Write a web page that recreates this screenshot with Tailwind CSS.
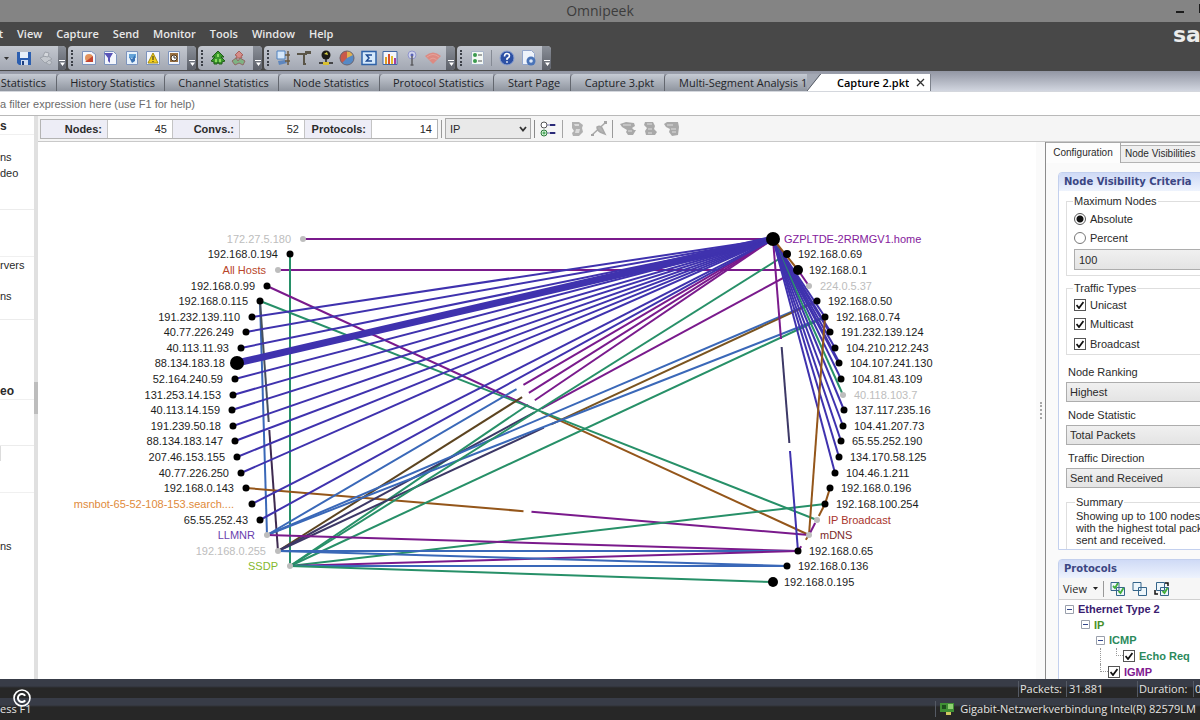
<!DOCTYPE html>
<html lang="en">
<head>
  <meta charset="UTF-8" />
  <meta name="viewport" content="width=device-width, initial-scale=1" />
  <title>Omnipeek</title>
  <script src="https://cdn.jsdelivr.net/npm/@tailwindcss/browser@4"></script>
</head>
<body class="h-screen flex flex-col overflow-hidden bg-white text-[11px] leading-4 text-[#2a2a2a] font-['Liberation_Sans',Arial,sans-serif]">

  <!-- Title bar -->
  <header class="relative shrink-0 h-[22px] bg-[#848484] flex items-center justify-center font-['Open_Sans',sans-serif]">
    <h1 class="text-sm text-[#3c3c3c]">Omnipeek</h1>
    <button aria-label="Minimize" class="absolute right-4 top-[11px] w-2 h-[2px] bg-[#1c1c1c]"></button>
    <button aria-label="Maximize" class="absolute -right-2 top-1 size-[9px] border border-[#1c1c1c]"></button>
  </header>

  <!-- Menu and toolbars -->
  <div class="relative shrink-0 bg-[#484848]">
    <nav class="h-6 flex items-center gap-[14px] text-[#e8e8e8] font-semibold font-['Open_Sans',sans-serif]">
      <a href="#" class="w-[3px] flex justify-end">t</a>
      <a href="#">View</a>
      <a href="#">Capture</a>
      <a href="#">Send</a>
      <a href="#">Monitor</a>
      <a href="#">Tools</a>
      <a href="#">Window</a>
      <a href="#">Help</a>
    </nav>
    <div class="absolute left-[1173px] top-px text-[22px] leading-6 font-bold text-[#ececec] whitespace-nowrap font-['DejaVu_Sans',sans-serif]">sa</div>

    <div class="h-[25px] pb-px flex gap-[2px]">
      <div class="w-[66px] flex rounded-r-sm overflow-hidden bg-linear-to-b from-[#c3c7cf] to-[#a3a8b3]">
        <div class="flex-1 flex items-center justify-between pl-1 pr-1">
          <svg class="w-[5px] h-[3px]" viewBox="0 0 5 3"><path d="M0 0h5L2.500 3z" fill="#333"/></svg>
          <button aria-label="Save"><svg class="size-4" viewBox="0 0 16 16"><path d="M1 2h14v13H3l-2-2z" fill="#2c5fb0"/><path d="M4 2h8v6H4z" fill="#e8f0fa"/><path d="M5 10h7v5H5z" fill="#cfdcf0"/><path d="M6 11h2v4H6z" fill="#1d3f80"/></svg></button>
          <button aria-label="Print"><svg class="size-4" viewBox="0 0 16 16" fill="#c4c8ce" stroke="#9da2aa"><path d="M2 8l7-3 5 4-7 4z"/><path d="M5 6l2-4 4 1-1 4z" fill="#d5d8dd"/><path d="M8 13l3-3 3 2-2 3z"/></svg></button>
        </div>
        <button aria-label="More buttons" class="w-2 flex items-end justify-center pb-1 bg-linear-to-b from-[#8b9099] to-[#5c6069]"><svg class="w-[6px] h-[6px]" viewBox="0 0 6 6" fill="#fff"><path d="M0 0h6v1H0zM1 2.500h5L3.500 6z"/></svg></button>
      </div>

      <div class="w-[128px] flex rounded-sm overflow-hidden bg-linear-to-b from-[#c3c7cf] to-[#a3a8b3]">
        <div class="flex-1 flex items-center justify-between pl-[3px] pr-[5px]">
          <span class="border-l-2 border-dotted border-[#3c4048] h-4"></span>
          <button aria-label="Capture window" class="ml-[3px]"><svg class="size-4" viewBox="0 0 16 16"><path d="M1.500 1.500h9l4 3v10h-13z" fill="#f3f6fc" stroke="#7c93bd"/><circle cx="8" cy="8" r="4" fill="#e2925c"/><path d="M4 12l8-6v6z" fill="#c54430"/></svg></button>
          <button aria-label="Filters"><svg class="size-4" viewBox="0 0 16 16"><path d="M2.500 1.500h9l3 3v10h-12z" fill="#f3f6fc" stroke="#7c93bd"/><path d="M2 3h9l-3 5v5l-2-2V8z" fill="#5a55b8"/></svg></button>
          <button aria-label="Packets"><svg class="size-4" viewBox="0 0 16 16"><path d="M2.500 1.500h11v13h-11z" fill="#e6f1fb" stroke="#7c93bd"/><path d="M5 4h7v4H5z" fill="#64a3d8"/><path d="M5 7l3 2 3-4v6l-3 2z" fill="#3b73b4"/></svg></button>
          <button aria-label="Alarms"><svg class="size-4" viewBox="0 0 16 16"><path d="M1.500 1.500h13v13h-13z" fill="#f3f6fc" stroke="#7c93bd"/><path d="M8 3l5 10H3z" fill="#f2cf1d" stroke="#a48b10"/><path d="M7.500 6h1v4h-1zM7.500 11h1v1h-1z" fill="#222"/></svg></button>
          <button aria-label="Log"><svg class="size-4" viewBox="0 0 16 16"><path d="M2.500 1.500h11v13h-11z" fill="#f3f6fc" stroke="#7c93bd"/><path d="M4 3h8v9H4z" fill="#9a7040"/><circle cx="8" cy="8" r="3" fill="#fff" stroke="#4a3620"/><path d="M8 6v2h2" fill="none" stroke="#333"/></svg></button>
        </div>
        <button aria-label="More buttons" class="w-[9px] flex items-end justify-center pb-1 bg-linear-to-b from-[#8b9099] to-[#5c6069]"><svg class="w-[6px] h-[6px]" viewBox="0 0 6 6" fill="#fff"><path d="M0 0h6v1H0zM1 2.500h5L3.500 6z"/></svg></button>
      </div>

      <div class="w-16 flex rounded-sm overflow-hidden bg-linear-to-b from-[#c3c7cf] to-[#a3a8b3]">
        <div class="flex-1 flex items-center justify-between pl-[3px] pr-[6px]">
          <span class="border-l-2 border-dotted border-[#3c4048] h-4"></span>
          <button aria-label="Start capture" class="ml-[2px]"><svg class="size-4" viewBox="0 0 16 16"><path d="M8 1l6 6h-3l4 4-3 1v2H9l-1-2-1 2H4v-2l-3-1 4-4H2z" fill="#3a9a2c" stroke="#215c18"/><path d="M7 4h2v3H7zM5 9h2v3H5zM9 9h2v3H9z" fill="#8ad862"/></svg></button>
          <button aria-label="Stop capture"><svg class="size-4" viewBox="0 0 16 16"><path d="M8 1l4 4-2 1 1 2H5l1-2-2-1z" fill="#d58c88" stroke="#a8625c"/><path d="M1 11l4-3 2 3 2-3 5 3-2 4-4-2-4 2z" fill="#7fb283" stroke="#8e6a66"/></svg></button>
        </div>
        <button aria-label="More buttons" class="w-[9px] flex items-end justify-center pb-1 bg-linear-to-b from-[#8b9099] to-[#5c6069]"><svg class="w-[6px] h-[6px]" viewBox="0 0 6 6" fill="#fff"><path d="M0 0h6v1H0zM1 2.500h5L3.500 6z"/></svg></button>
      </div>

      <div class="w-[191px] flex rounded-sm overflow-hidden bg-linear-to-b from-[#c3c7cf] to-[#a3a8b3]">
        <div class="flex-1 flex items-center justify-between pl-[3px] pr-[5px]">
          <span class="border-l-2 border-dotted border-[#3c4048] h-4"></span>
          <button aria-label="Node statistics"><svg class="size-4" viewBox="0 0 16 16"><path d="M2 1h8v8H2z" fill="#d6e7f8" stroke="#4e82c0"/><path d="M3 11l7-1 2 3-8 2z" fill="#5e86bd"/><path d="M13 1v14M10 5h5M10 11h5" stroke="#6b5a40" stroke-width="1.500"/></svg></button>
          <button aria-label="Protocol statistics"><svg class="size-4" viewBox="0 0 16 16"><path d="M1 3h6v2H1zM9 1h6v3H9z" fill="#5a5548"/><path d="M6 4h5M8 4v10h2" fill="none" stroke="#5a5548" stroke-width="2"/></svg></button>
          <button aria-label="Network statistics"><svg class="size-4" viewBox="0 0 16 16"><circle cx="8" cy="5" r="4.500" fill="#1b1b18"/><path d="M6 4l3-2 1 3z" fill="#d8d040"/><path d="M8 9v4M1 13h14" stroke="#222" stroke-width="1.500"/><path d="M5 12h6v3H5z" fill="#d8c030"/></svg></button>
          <button aria-label="Size statistics"><svg class="size-4" viewBox="0 0 16 16"><circle cx="8" cy="8" r="7" fill="#5689c4"/><path d="M8 8V1A7 7 0 0 1 14 5z" fill="#e0b050"/><path d="M8 8L3 13A7 7 0 0 1 8 1z" fill="#c9594a"/><circle cx="8" cy="8" r="7" fill="none" stroke="#6c6670"/></svg></button>
          <button aria-label="Summary statistics"><svg class="size-4" viewBox="0 0 16 16"><path d="M1 1.500h14v13H1z" fill="#d5e9fb" stroke="#2e62a8" stroke-width="1.500"/><path d="M11 5H5.500L8 8l-2.500 3H11" fill="none" stroke="#1f4c94" stroke-width="1.500"/></svg></button>
          <button aria-label="History statistics"><svg class="size-4" viewBox="0 0 16 16"><path d="M1 1.500h14v13H1z" fill="#f4f6fb" stroke="#4268a4"/><path d="M3 7h2v7H3z" fill="#e0a020"/><path d="M6 4h2v10H6z" fill="#d8502c"/><path d="M9 6h2v8H9z" fill="#e5bb30"/><path d="M12 8h2v6h-2z" fill="#a840a0"/></svg></button>
          <button aria-label="Channel statistics"><svg class="size-4" viewBox="0 0 16 16"><circle cx="8" cy="5" r="4" fill="#cfd3ec" stroke="#8f94cc"/><circle cx="8" cy="5" r="1.500" fill="#5a62b4"/><path d="M8 6v9M6.500 15h3" stroke="#5c5c60" stroke-width="1.500"/></svg></button>
          <button aria-label="Wireless signal"><svg class="size-4" viewBox="0 0 16 16"><path d="M0 6q8-7 16 0L8 14z" fill="#dc8a82"/><path d="M2 7q6-5 12 0M4.500 9.500q3.500-3 7 0" fill="none" stroke="#e6a29a"/></svg></button>
        </div>
        <button aria-label="More buttons" class="w-[9px] flex items-end justify-center pb-1 bg-linear-to-b from-[#8b9099] to-[#5c6069]"><svg class="w-[6px] h-[6px]" viewBox="0 0 6 6" fill="#fff"><path d="M0 0h6v1H0zM1 2.500h5L3.500 6z"/></svg></button>
      </div>

      <div class="w-[94px] flex rounded-sm overflow-hidden bg-linear-to-b from-[#c3c7cf] to-[#a3a8b3]">
        <div class="flex-1 flex items-center justify-between pl-[3px] pr-[5px]">
          <span class="border-l-2 border-dotted border-[#3c4048] h-4"></span>
          <button aria-label="Options"><svg class="size-4" viewBox="0 0 16 16"><path d="M2.500 1.500h12v13h-12z" fill="#f3f8f4" stroke="#a8b4c8"/><circle cx="6" cy="5" r="2" fill="#3a9a4c"/><circle cx="6" cy="11" r="2" fill="#3a9a4c"/><path d="M9 5h4M9 11h4" stroke="#555"/></svg></button>
          <span class="w-px h-4 bg-[#858a94]"></span>
          <button aria-label="Help"><svg class="size-4" viewBox="0 0 16 16"><circle cx="8" cy="8" r="7" fill="#2c50a4" stroke="#8aa0d0"/><path d="M5.500 6.500q0-3 2.500-3t2.500 2.300Q10.500 7.500 8 8.500V10M8 11.200v1.600" fill="none" stroke="#fff" stroke-width="1.600"/></svg></button>
          <button aria-label="Readme"><svg class="size-4" viewBox="0 0 16 16"><path d="M1.500.500h9l3 3v11h-12z" fill="#eef3fb" stroke="#93a6cb"/><circle cx="10" cy="11" r="4.500" fill="#4a74b8"/><circle cx="10" cy="11" r="1.800" fill="#dbe7f7"/></svg></button>
        </div>
        <button aria-label="More buttons" class="w-[9px] flex items-end justify-center pb-1 bg-linear-to-b from-[#8b9099] to-[#5c6069]"><svg class="w-[6px] h-[6px]" viewBox="0 0 6 6" fill="#fff"><path d="M0 0h6v1H0zM1 2.500h5L3.500 6z"/></svg></button>
      </div>
    </div>
  </div>

  <!-- Document tabs -->
  <div role="tablist" class="relative shrink-0 h-5 pt-[3px] flex bg-linear-to-b from-[#9296a3] to-[#d2d6e0] font-medium text-[#222428] font-['Open_Sans',sans-serif] whitespace-nowrap">
    <button role="tab" class="w-14 pr-[10px] flex justify-end items-center bg-linear-to-b from-[#c6cbd4] to-[#8f959f]">Statistics</button>
    <button role="tab" class="w-[108px] pl-1 flex justify-center items-center border-l border-[#63676f] rounded-tl bg-linear-to-b from-[#c6cbd4] to-[#8f959f]">History Statistics</button>
    <button role="tab" class="w-[114px] pl-1 flex justify-center items-center border-l border-[#63676f] rounded-tl bg-linear-to-b from-[#c6cbd4] to-[#8f959f]">Channel Statistics</button>
    <button role="tab" class="w-[101px] pl-1 flex justify-center items-center border-l border-[#63676f] rounded-tl bg-linear-to-b from-[#c6cbd4] to-[#8f959f]">Node Statistics</button>
    <button role="tab" class="w-[114px] pl-1 flex justify-center items-center border-l border-[#63676f] rounded-tl bg-linear-to-b from-[#c6cbd4] to-[#8f959f]">Protocol Statistics</button>
    <button role="tab" class="w-[77px] pl-1 flex justify-center items-center border-l border-[#63676f] rounded-tl bg-linear-to-b from-[#c6cbd4] to-[#8f959f]">Start Page</button>
    <button role="tab" class="w-[94px] pl-1 flex justify-center items-center border-l border-[#63676f] rounded-tl bg-linear-to-b from-[#c6cbd4] to-[#8f959f]">Capture 3.pkt</button>
    <button role="tab" class="w-[143px] pl-[14px] flex items-center border-l border-[#63676f] rounded-tl bg-linear-to-b from-[#c6cbd4] to-[#8f959f]">Multi-Segment Analysis 1</button>
    <div class="flex">
      <svg class="w-[14px] h-[17px]" viewBox="0 0 14 17"><path d="M0 0h14v17H0z" fill="#a4a9b4"/><path d="M0 17L14 0v17z" fill="#fff"/><path d="M0 17L12 2q1-2 2-2" fill="none" stroke="#555a64"/></svg>
      <button role="tab" aria-selected="true" class="pl-4 flex items-center bg-white font-semibold text-black">Capture 2.pkt</button>
      <button aria-label="Close tab" class="pr-[5px] pl-[7px] flex items-center bg-white border-r border-[#7d828c]"><svg class="size-[9px]" viewBox="0 0 9 9"><path d="M1 1l7 7M8 1L1 8" stroke="#333" stroke-width="1.300"/></svg></button>
    </div>
  </div>

  <!-- Filter expression -->
  <div class="shrink-0 h-[25px] border-t border-b border-t-[#d4d7dd] border-b-[#b9b9b9] flex items-center">
    <input aria-label="Filter expression" placeholder="a filter expression here (use F1 for help)" class="flex-1 outline-none placeholder:text-[#6c6c6c]" />
  </div>

  <main class="flex-1 min-h-0 flex">
    <!-- Views list -->
    <aside class="w-[34px] shrink-0 overflow-hidden">
      <div class="h-[19px] border-b border-[#f0f0f0] flex items-end text-xs font-bold">s</div>
      <ul class="h-[75px] pt-[14px] border-b border-[#ececec]">
        <li>ns</li>
        <li>deo</li>
      </ul>
      <div class="h-[47px] border-b border-[#f0f0f0]"></div>
      <ul class="h-[63px] border-b border-[#ececec] flex flex-col gap-[15px]">
        <li>rvers</li>
        <li>ns</li>
      </ul>
      <div class="h-20 border-b border-[#f0f0f0] flex items-end text-xs font-bold"><span>eo</span></div>
      <div class="h-[46px] border-b border-[#ececec]"></div>
      <div class="h-[15px] w-px bg-[#dcdcdc]"></div>
      <div class="h-[32px] border-b border-[#f0f0f0]"></div>
      <div class="pt-[45px]">ns</div>
    </aside>
    <div class="w-1 shrink-0 bg-[#e0e0e0] flex items-center">
      <div class="w-1 h-8 bg-[#bdbdbd]"></div>
    </div>

    <section class="flex-1 min-w-0 flex flex-col">
      <!-- Counters and peer map tools -->
      <div class="shrink-0 h-[26px] px-[2px] flex items-center bg-[#f5f5f5] border-b border-[#c9c9c9]">
        <dl class="h-5 grid grid-cols-[repeat(6,66px)] items-stretch border border-[#b4b4b4] text-right leading-[18px]">
          <dt class="pr-[5px] font-bold bg-[#ededf6]">Nodes:</dt>
          <dd class="px-[5px] bg-white border-x border-[#c4c4c4]">45</dd>
          <dt class="pr-[5px] font-bold bg-[#ededf6]">Convs.:</dt>
          <dd class="px-[5px] bg-white border-x border-[#c4c4c4]">52</dd>
          <dt class="pr-[5px] font-bold bg-[#ededf6]">Protocols:</dt>
          <dd class="px-[5px] bg-white border-l border-[#c4c4c4]">14</dd>
        </dl>
        <span class="ml-[3px] w-px h-[18px] bg-[#9a9a9a]"></span>
        <div class="relative ml-[3px]">
          <select aria-label="Protocol layer" class="appearance-none block w-[86px] h-[21px] pl-1 border border-[#a9a9a9] bg-[#e9e9e9]">
            <option>IP</option>
          </select>
          <svg class="absolute right-1 top-2 w-2 h-[6px] pointer-events-none" viewBox="0 0 8 6"><path d="M1 1l3 3.500L7 1" fill="none" stroke="#333" stroke-width="1.800"/></svg>
        </div>
        <span class="ml-[3px] w-px h-[18px] bg-[#8a8a8a]"></span>
        <button aria-label="Node options" class="ml-[5px]"><svg class="size-4" viewBox="0 0 16 16"><circle cx="4" cy="4" r="3" fill="#fff" stroke="#555"/><circle cx="4" cy="12" r="3" fill="#d5f0d8" stroke="#2d7a3c"/><path d="M4 10.500v3M2.500 12h3" stroke="#2a9a3c"/><path d="M7 4h9M7 12h9" stroke="#77a" stroke-width="1"/><path d="M10 3h5v2h-5zM10 11h5v2h-5z" fill="#2a2a78"/></svg></button>
        <span class="ml-[6px] w-px h-[18px] bg-[#a5a5a5]"></span>
        <button aria-label="Show node" class="ml-[6px]"><svg class="size-4" viewBox="0 0 16 16" fill="#b0b0b0"><path d="M3 1h7l4 3-1 3 1 4-4 4H4l-1-3 2-2-2-3z"/><path d="M5 3h5v2H6zM7 8h4l-1 4H6z" fill="#dadada"/></svg></button>
        <button aria-label="Arrange map" class="ml-[6px]"><svg class="size-4" viewBox="0 0 16 16" fill="none" stroke="#a8a8a8" stroke-width="1.500"><path d="M1 14L14 2"/><path d="M6 6q3-2 5 1l3 6-5-2q-3-2-3-5z" fill="#b4b4b4"/><path d="M0 13h3v2H0zM13 0h3v3h-3z" fill="#a4a4a4" stroke="none"/></svg></button>
        <span class="ml-[5px] w-px h-[18px] bg-[#9a9a9a]"></span>
        <button aria-label="Filter nodes" class="ml-[7px]"><svg class="size-4" viewBox="0 0 16 16" fill="#a9a9a9"><path d="M0 3l6-2 8 1 1 3-3 2 2 2h2l-3 5H8l-2-3 1-2-5-3z"/><path d="M3 4h8M8 10h4" stroke="#ddd"/></svg></button>
        <button aria-label="Filter pairs" class="ml-[6px]"><svg class="size-4" viewBox="0 0 16 16" fill="#a9a9a9"><path d="M3 1h8l2 4-1 3 3 3-2 3H4l-1-4 2-3-3-3z"/><path d="M5 3h5M6 8h4M6 12h4" stroke="#ddd"/></svg></button>
        <button aria-label="Filter protocols" class="ml-[6px]"><svg class="size-4" viewBox="0 0 16 16" fill="#a9a9a9"><path d="M0 3l3-2h11l1 5-1 8-6 1-3-4 1-3-4-2z"/><path d="M3 4h6M7 8h5M8 11h4" stroke="#ddd"/></svg></button>
      </div>

      <div class="flex-1 min-h-0 flex">
        <!-- Peer map -->
        <div class="flex-1 min-w-0 overflow-hidden bg-white">
          <svg id="peerMap" role="img" aria-label="Peer map" class="block w-[998px] h-[536px]" viewBox="38 142 998 536"></svg>
        </div>

        <div class="w-[10px] shrink-0 bg-[#fafafa] border-r border-[#8c8c8c] flex items-center justify-center">
          <div class="h-[17px] border-l-2 border-dotted border-[#a8a8a8]"></div>
        </div>

        <!-- Configuration panel -->
        <aside class="w-[154px] shrink-0 overflow-hidden bg-[#fafafa] border-t border-[#a8a8a8]">
          <div role="tablist" class="h-5 flex items-end text-[10px]">
            <button role="tab" aria-selected="true" class="h-5 w-[75px] bg-[#fdfdfd] border-r border-[#a8a8a8]">Configuration</button>
            <button role="tab" class="h-[18px] flex-1 pl-1 text-left whitespace-nowrap bg-[#efefef] border-t border-b border-[#b4b4b4]">Node Visibilities</button>
          </div>

          <div class="w-[220px]">
            <section class="mt-[9px] ml-3 h-[378px] overflow-hidden rounded-tl-[4px] border border-[#c3d0ee] bg-white">
              <h2 class="h-[18px] pl-[5px] text-[10px] leading-[18px] bg-linear-to-b from-[#cfdaf6] to-[#eef3fd] font-bold text-[#3b4683] font-['DejaVu_Sans',sans-serif]">Node Visibility Criteria</h2>
              <div class="pl-[7px] pt-[2px]">
                <fieldset class="h-[83px] pl-[7px] border border-[#dedede]">
                  <legend class="px-px -ml-px">Maximum Nodes</legend>
                  <label class="h-[19px] flex items-center gap-1"><input type="radio" name="max" checked class="appearance-none size-3 rounded-full border border-[#555] bg-white bg-[radial-gradient(circle,#111_0,#111_3px,#fff_4px)]" />Absolute</label>
                  <label class="h-5 flex items-center gap-1"><input type="radio" name="max" class="appearance-none size-3 rounded-full border border-[#777] bg-white" />Percent</label>
                  <select aria-label="Node count" class="appearance-none block mt-px w-[150px] h-[21px] pl-1 border border-[#adadad] bg-linear-to-b from-[#f0f0f0] to-[#e4e4e4]">
                    <option>100</option>
                  </select>
                </fieldset>
                <fieldset class="mt-1 h-[75px] pl-[7px] border border-[#dedede]">
                  <legend class="px-px -ml-px">Traffic Types</legend>
                  <label class="relative h-[19px] -mt-px flex items-center gap-1"><input type="checkbox" checked class="appearance-none size-3 border border-[#555] bg-white" /><svg class="absolute left-[2px] size-2" viewBox="0 0 8 8"><path d="M.500 4L3 7l4.500-6" fill="none" stroke="#111" stroke-width="1.800"/></svg>Unicast</label>
                  <label class="relative h-5 flex items-center gap-1"><input type="checkbox" checked class="appearance-none size-3 border border-[#555] bg-white" /><svg class="absolute left-[2px] size-2" viewBox="0 0 8 8"><path d="M.500 4L3 7l4.500-6" fill="none" stroke="#111" stroke-width="1.800"/></svg>Multicast</label>
                  <label class="relative h-[19px] flex items-center gap-1"><input type="checkbox" checked class="appearance-none size-3 border border-[#555] bg-white" /><svg class="absolute left-[2px] size-2" viewBox="0 0 8 8"><path d="M.500 4L3 7l4.500-6" fill="none" stroke="#111" stroke-width="1.800"/></svg>Broadcast</label>
                </fieldset>
                <div class="pt-[9px] flex flex-col gap-[5px]">
                  <div>
                    <label for="ranking" class="block pl-[2px] h-[18px]">Node Ranking</label>
                    <select id="ranking" class="appearance-none block w-[190px] h-5 pl-[3px] border border-[#adadad] bg-linear-to-b from-[#f0f0f0] to-[#e4e4e4]"><option>Highest</option></select>
                  </div>
                  <div>
                    <label for="statistic" class="block pl-[2px] h-[18px]">Node Statistic</label>
                    <select id="statistic" class="appearance-none block w-[190px] h-5 pl-[3px] border border-[#adadad] bg-linear-to-b from-[#f0f0f0] to-[#e4e4e4]"><option>Total Packets</option></select>
                  </div>
                  <div>
                    <label for="direction" class="block pl-[2px] h-[18px]">Traffic Direction</label>
                    <select id="direction" class="appearance-none block w-[190px] h-5 pl-[3px] border border-[#adadad] bg-linear-to-b from-[#f0f0f0] to-[#e4e4e4]"><option>Sent and Received</option></select>
                  </div>
                </div>
                <fieldset class="mt-[6px] h-[60px] pl-[9px] border border-[#dedede]">
                  <legend class="px-px -ml-px">Summary</legend>
                  <p class="leading-3 whitespace-nowrap">Showing up to 100 nodes<br />with the highest total packets<br />sent and received.</p>
                </fieldset>
              </div>
            </section>

            <section class="mt-[9px] ml-3 rounded-tl-[4px] border border-[#c3d0ee] bg-white">
              <h2 class="h-[18px] pl-[5px] text-[10px] leading-[18px] bg-linear-to-b from-[#cfdaf6] to-[#eef3fd] font-bold text-[#3b4683] font-['DejaVu_Sans',sans-serif]">Protocols</h2>
              <div class="h-[22px] pl-1 flex items-center bg-[#f6f6f6] border-b border-[#d0d0d0] font-['Open_Sans',sans-serif]">
                <button class="flex items-center gap-[6px]">View <svg class="w-[5px] h-[3px]" viewBox="0 0 5 3"><path d="M0 0h5L2.500 3z" fill="#222"/></svg></button>
                <span class="ml-[5px] w-px h-4 bg-[#999]"></span>
                <button aria-label="Check all" class="ml-[6px]"><svg class="size-4" viewBox="0 0 16 16" fill="#eef6fb" stroke="#35658a"><path d="M1 1.500h8v8H1zM6.500 6.500h8v8h-8z"/><path d="M3 5l2 2 3-5M8.500 10l2 2 3-5" fill="none" stroke="#3fae3a" stroke-width="1.800"/></svg></button>
                <button aria-label="Uncheck all" class="ml-[6px]"><svg class="size-4" viewBox="0 0 16 16" fill="#eef6fb" stroke="#35658a"><path d="M1 1.500h8v8H1zM6.500 6.500h8v8h-8z"/></svg></button>
                <button aria-label="Toggle checks" class="ml-[6px]"><svg class="size-4" viewBox="0 0 16 16" fill="#eef6fb" stroke="#35658a"><path d="M2.500 1.500h8v8h-8zM6.500 6.500h8v8h-8z"/><path d="M8.500 10l2 2 3-5" fill="none" stroke="#3fae3a" stroke-width="1.800"/><path d="M11 2h3v3M1 9v4h3" fill="none" stroke="#111" stroke-width="1.500"/></svg></button>
              </div>
              <ul class="pt-px font-bold whitespace-nowrap">
                <li class="h-4 pl-[6px] flex items-center gap-1 text-[#3a2070]"><svg class="size-[9px]" viewBox="0 0 9 9"><path d="M.500.500h8v8h-8z" fill="#fff" stroke="#9aa0ac"/><path d="M2 4.500h5" stroke="#33478c"/></svg>Ethernet Type 2</li>
                <li class="h-[15px] pl-[22px] flex items-center gap-1 text-[#48902a]"><svg class="size-[9px]" viewBox="0 0 9 9"><path d="M.500.500h8v8h-8z" fill="#fff" stroke="#9aa0ac"/><path d="M2 4.500h5" stroke="#33478c"/></svg>IP</li>
                <li class="h-4 pl-[37px] flex items-center gap-1 text-[#2b8a5c]"><svg class="size-[9px]" viewBox="0 0 9 9"><path d="M.500.500h8v8h-8z" fill="#fff" stroke="#9aa0ac"/><path d="M2 4.500h5" stroke="#33478c"/></svg>ICMP</li>
                <li class="h-4 pl-[41px] flex items-start text-[#2b8a5c]">
                  <span class="w-4 h-4 border-l border-dotted border-[#999]"></span>
                  <span class="w-[7px] h-2 border-l border-b border-dotted border-[#999]"></span>
                  <label class="relative h-4 flex items-center gap-1"><input type="checkbox" checked class="appearance-none size-3 border border-[#555] bg-white" /><svg class="absolute left-[2px] size-2" viewBox="0 0 8 8"><path d="M.500 4L3 7l4.500-6" fill="none" stroke="#111" stroke-width="1.800"/></svg>Echo Req</label>
                </li>
                <li class="h-4 pl-[41px] flex items-start text-[#801a90]">
                  <span class="w-2 h-2 border-l border-b border-dotted border-[#999]"></span>
                  <label class="relative h-4 flex items-center gap-1"><input type="checkbox" checked class="appearance-none size-3 border border-[#555] bg-white" /><svg class="absolute left-[2px] size-2" viewBox="0 0 8 8"><path d="M.500 4L3 7l4.500-6" fill="none" stroke="#111" stroke-width="1.800"/></svg>IGMP</label>
                </li>
              </ul>
            </section>
          </div>
        </aside>
      </div>
    </section>
  </main>

  <!-- Status bars -->
  <footer class="relative shrink-0 text-[#e4e4e4] font-medium font-['Open_Sans',sans-serif] whitespace-nowrap">
    <div class="h-[19px] pt-px flex justify-end items-center bg-[linear-gradient(#383c47_0,#383c47_7px,#272727_9px,#272727_100%)] overflow-hidden">
      <span class="w-12 pl-px border-l border-[#555a64]">Packets:</span>
      <span class="w-[71px] pl-[2px] border-l border-[#555a64]">31.881</span>
      <span class="w-[56px] pl-px border-l border-[#555a64]">Duration:</span>
      <span class="w-[7px] pl-px border-l border-[#555a64] overflow-hidden">0</span>
    </div>
    <div class="h-[22px] flex justify-between items-center bg-[linear-gradient(#383c47_0,#383c47_7px,#272727_9px,#272727_100%)]">
      <span>ess F1</span>
      <span class="pl-1 pr-1 flex items-center gap-[6px] border-l border-[#555a64]">
        <svg class="w-[14px] h-3" viewBox="0 0 14 12"><path d="M0 0h14v9H0z" fill="#3f8f34"/><path d="M2 2h4v4H2z" fill="#1d4d1c"/><path d="M8 1h5v5H8z" fill="#8fd070"/><path d="M6 9h5v3H6z" fill="#d0c860"/></svg>
        Gigabit-Netzwerkverbindung Intel(R) 82579LM
      </span>
    </div>
    <svg class="absolute left-[13px] top-[10px] size-[18px]" viewBox="0 0 18 18" fill="none" stroke="#fff"><circle cx="9" cy="9" r="8" stroke-width="1.600"/><path d="M12.200 6.700a4 4 0 1 0 0 4.600" stroke-width="2"/></svg>
  </footer>

  <script>
    const peerMap = document.getElementById("peerMap");
    const INK = "#1c1c1c", GRAY = "#bdbdbd";
    const VIOLET = "#7a1a8c", INDIGO = "#3f32ae", GREEN = "#279068", BROWN = "#94561a", BLUE = "#3a68b8", SLATE = "#3c3866";

    // name: [x, y, radius, side, label colour, dot colour]
    const nodes = {
      "172.27.5.180": [303, 239, 3, "left", GRAY, GRAY],
      "192.168.0.194": [290, 254, 3.500, "left"],
      "All Hosts": [278, 270, 3, "left", "#b8452a", GRAY],
      "192.168.0.99": [267, 286, 3.500, "left"],
      "192.168.0.115": [260, 301, 3.500, "left"],
      "191.232.139.110": [252, 317, 3.500, "left"],
      "40.77.226.249": [246, 332, 3.500, "left"],
      "40.113.11.93": [241, 348, 3.500, "left"],
      "88.134.183.18": [237, 363, 7, "left"],
      "52.164.240.59": [235, 379, 3.500, "left"],
      "131.253.14.153": [233, 395, 3.500, "left"],
      "40.113.14.159": [232, 410, 3.500, "left"],
      "191.239.50.18": [233, 426, 3.500, "left"],
      "88.134.183.147": [235, 441, 3.500, "left"],
      "207.46.153.155": [237, 457, 3.500, "left"],
      "40.77.226.250": [241, 473, 3.500, "left"],
      "192.168.0.143": [246, 488, 3.500, "left"],
      "msnbot-65-52-108-153.search....": [252, 504, 3.500, "left", "#e08a3a"],
      "65.55.252.43": [260, 520, 3.500, "left"],
      "LLMNR": [267, 535, 3, "left", "#6a3fae", GRAY],
      "192.168.0.255": [278, 551, 3, "left", GRAY, GRAY],
      "SSDP": [290, 566, 3, "left", "#84b82c", GRAY],
      "GZPLTDE-2RRMGV1.home": [773, 239, 7, "right", "#84209c"],
      "192.168.0.69": [787, 254, 4, "right"],
      "192.168.0.1": [798, 270, 5, "right"],
      "224.0.5.37": [809, 286, 3, "right", GRAY, GRAY],
      "192.168.0.50": [817, 301, 3.500, "right"],
      "192.168.0.74": [825, 317, 3.500, "right"],
      "191.232.139.124": [830, 332, 3.500, "right"],
      "104.210.212.243": [835, 348, 3.500, "right"],
      "104.107.241.130": [839, 363, 3.500, "right"],
      "104.81.43.109": [841, 379, 3.500, "right"],
      "40.118.103.7": [843, 395, 3, "right", GRAY, GRAY],
      "137.117.235.16": [844, 410, 3.500, "right"],
      "104.41.207.73": [843, 426, 3.500, "right"],
      "65.55.252.190": [841, 441, 3.500, "right"],
      "134.170.58.125": [839, 457, 3.500, "right"],
      "104.46.1.211": [835, 473, 3.500, "right"],
      "192.168.0.196": [830, 488, 3.500, "right"],
      "192.168.100.254": [825, 504, 3.500, "right"],
      "IP Broadcast": [817, 520, 3, "right", "#a8342c", GRAY],
      "mDNS": [809, 535, 3, "right", "#7c2a2a", GRAY],
      "192.168.0.65": [798, 551, 3.500, "right"],
      "192.168.0.136": [787, 566, 3.500, "right"],
      "192.168.0.195": [773, 582, 5, "right"],
    };

    const HOME = "GZPLTDE-2RRMGV1.home";
    const MSNBOT = "msnbot-65-52-108-153.search....";

    // from, to, one colour per protocol, width
    const links = [
      ["172.27.5.180", HOME, [VIOLET]],
      ["All Hosts", "192.168.0.1", [VIOLET]],
      ["192.168.0.194", "SSDP", [GREEN]],
      ["192.168.0.115", "LLMNR", [BLUE]],
      ["192.168.0.115", "192.168.0.255", ["#46505c", "#3e2a50"]],
      ["192.168.0.99", "mDNS", [VIOLET, BROWN]],
      ["192.168.0.115", "IP Broadcast", [GREEN]],
      ["192.168.0.143", "mDNS", [BROWN, VIOLET]],
      ["LLMNR", HOME, [BLUE, VIOLET]],
      ["192.168.0.255", HOME, ["#5c4420", VIOLET]],
      ["SSDP", HOME, [GREEN, VIOLET]],
      ["192.168.0.255", "192.168.0.1", [SLATE, VIOLET]],
      ["LLMNR", "192.168.0.50", [BLUE]],
      ["192.168.0.255", "192.168.0.50", [SLATE, "#7a5420"]],
      ["LLMNR", "192.168.0.74", [BLUE]],
      ["SSDP", "192.168.0.69", [GREEN]],
      ["SSDP", "192.168.0.74", [GREEN]],
      ["SSDP", "192.168.100.254", [GREEN]],
      ["LLMNR", "192.168.0.65", [VIOLET]],
      ["192.168.0.255", "192.168.0.65", [BLUE]],
      ["SSDP", "192.168.0.65", [VIOLET]],
      ["192.168.0.255", "192.168.0.136", [BLUE]],
      ["SSDP", "192.168.0.136", [BLUE]],
      ["SSDP", "192.168.0.195", [GREEN]],
      [HOME, "192.168.0.65", [VIOLET, SLATE, INDIGO]],
      [HOME, "191.232.139.110", [INDIGO]],
      [HOME, "40.77.226.249", [INDIGO]],
      [HOME, "40.113.11.93", [INDIGO]],
      [HOME, "88.134.183.18", [INDIGO], 7],
      [HOME, "52.164.240.59", [INDIGO]],
      [HOME, "131.253.14.153", [INDIGO]],
      [HOME, "40.113.14.159", [INDIGO]],
      [HOME, "191.239.50.18", [INDIGO]],
      [HOME, "88.134.183.147", [INDIGO]],
      [HOME, "207.46.153.155", [INDIGO]],
      [HOME, "40.77.226.250", [INDIGO]],
      [HOME, MSNBOT, [INDIGO]],
      [HOME, "65.55.252.43", [INDIGO]],
      [HOME, "192.168.0.74", [INDIGO]],
      [HOME, "191.232.139.124", [INDIGO], 3],
      [HOME, "104.210.212.243", [INDIGO]],
      [HOME, "104.107.241.130", [INDIGO], 3],
      [HOME, "104.81.43.109", [INDIGO]],
      [HOME, "40.118.103.7", [GREEN]],
      [HOME, "137.117.235.16", [INDIGO]],
      [HOME, "104.41.207.73", [INDIGO]],
      [HOME, "65.55.252.190", [INDIGO]],
      [HOME, "134.170.58.125", [INDIGO]],
      [HOME, "104.46.1.211", [INDIGO]],
      [HOME, "192.168.0.1", [BROWN]],
      ["192.168.0.1", "224.0.5.37", [VIOLET]],
      ["192.168.0.74", "mDNS", [BROWN]],
      ["192.168.0.196", "192.168.100.254", [BROWN]],
      ["192.168.100.254", "mDNS", [BROWN, VIOLET]],
      ["192.168.0.65", "mDNS", [VIOLET, BROWN]],
    ];

    function add(tag, attrs, text) {
      const el = document.createElementNS("http://www.w3.org/2000/svg", tag);
      for (const key in attrs) el.setAttribute(key, attrs[key]);
      if (text) el.textContent = text;
      peerMap.appendChild(el);
    }

    links.forEach(([from, to, colors, width = 2]) => {
      const [x1, y1] = nodes[from];
      const [x2, y2] = nodes[to];
      const gap = 4 / Math.hypot(x2 - x1, y2 - y1);
      colors.forEach((color, i) => {
        const a = i / colors.length + (i > 0 ? gap : 0);
        const b = (i + 1) / colors.length - (i < colors.length - 1 ? gap : 0);
        add("line", {
          x1: x1 + (x2 - x1) * a, y1: y1 + (y2 - y1) * a,
          x2: x1 + (x2 - x1) * b, y2: y1 + (y2 - y1) * b,
          stroke: color, "stroke-width": width,
        });
      });
    });

    Object.entries(nodes).forEach(([name, [x, y, r, side, color = INK, dot = "#000"]]) => {
      // truncated names keep some room before the dot
      const space = name === MSNBOT ? 18 : 12;
      add("circle", { cx: x, cy: y, r, fill: dot });
      add("text", {
        x: side === "left" ? x - space : x + 11,
        y: y + 4,
        "text-anchor": side === "left" ? "end" : "start",
        fill: color,
      }, name);
    });
  </script>
</body>
</html>
